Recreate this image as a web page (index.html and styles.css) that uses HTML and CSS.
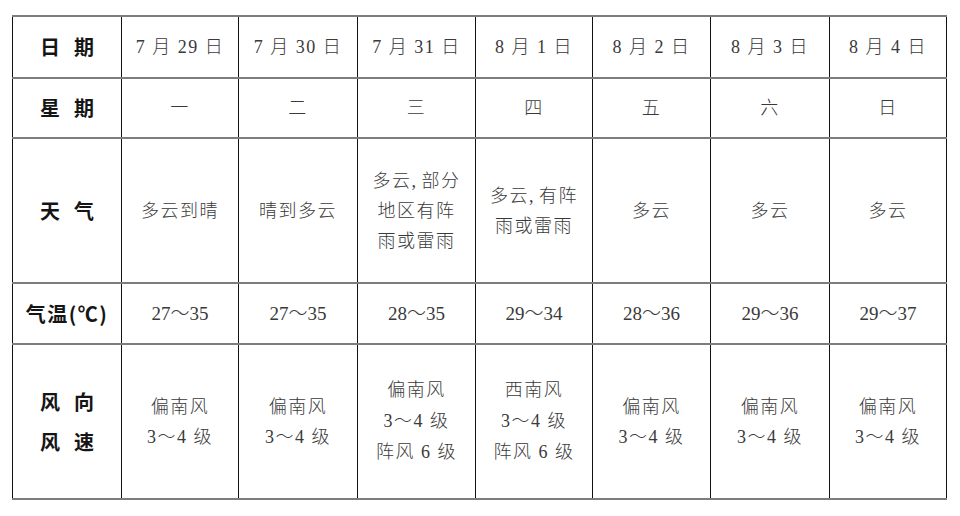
FILE: index.html
```html
<!DOCTYPE html>
<html lang="zh-CN">
<head>
<meta charset="utf-8">
<title>天气预报</title>
<link rel="stylesheet" href="styles.css">
</head>
<body>
<table class="forecast">
  <colgroup>
    <col class="c-label">
    <col class="c-117"><col class="c-119"><col class="c-118"><col class="c-117"><col class="c-118"><col class="c-119"><col class="c-117">
  </colgroup>
  <tr class="r-date">
    <th>日<span class="gap"></span>期</th>
    <td>7&nbsp;月&nbsp;29&nbsp;日</td>
    <td>7&nbsp;月&nbsp;30&nbsp;日</td>
    <td>7&nbsp;月&nbsp;31&nbsp;日</td>
    <td>8&nbsp;月&nbsp;1&nbsp;日</td>
    <td>8&nbsp;月&nbsp;2&nbsp;日</td>
    <td>8&nbsp;月&nbsp;3&nbsp;日</td>
    <td>8&nbsp;月&nbsp;4&nbsp;日</td>
  </tr>
  <tr class="r-week">
    <th>星<span class="gap"></span>期</th>
    <td>一</td><td>二</td><td>三</td><td>四</td><td>五</td><td>六</td><td>日</td>
  </tr>
  <tr class="r-weather">
    <th>天<span class="gap"></span>气</th>
    <td>多云到晴</td>
    <td>晴到多云</td>
    <td>多云<span class="comma">,</span>部分<br>地区有阵<br>雨或雷雨</td>
    <td>多云<span class="comma">,</span>有阵<br>雨或雷雨</td>
    <td>多云</td>
    <td>多云</td>
    <td>多云</td>
  </tr>
  <tr class="r-temp">
    <th class="temp-label">气温(℃)</th>
    <td>27～35</td><td>27～35</td><td>28～35</td><td>29～34</td><td>28～36</td><td>29～36</td><td>29～37</td>
  </tr>
  <tr class="r-wind">
    <th>风<span class="gap"></span>向<br>风<span class="gap"></span>速</th>
    <td>偏南风<br>3～4&nbsp;级</td>
    <td>偏南风<br>3～4&nbsp;级</td>
    <td class="three">偏南风<br>3～4&nbsp;级<br>阵风&nbsp;6&nbsp;级</td>
    <td class="three">西南风<br>3～4&nbsp;级<br>阵风&nbsp;6&nbsp;级</td>
    <td>偏南风<br>3～4&nbsp;级</td>
    <td>偏南风<br>3～4&nbsp;级</td>
    <td>偏南风<br>3～4&nbsp;级</td>
  </tr>
</table>
</body>
</html>
```
FILE: styles.css
```css
html, body {
  margin: 0;
  padding: 0;
  background: #ffffff;
}
body {
  padding: 15px 0 0 12px;
}
.forecast {
  border-collapse: collapse;
  table-layout: fixed;
  width: 934px;
}
.c-label { width: 109px; }
.c-117 { width: 117px; }
.c-118 { width: 118px; }
.c-119 { width: 119px; }

.forecast th,
.forecast td {
  border-left: 1px solid #111111;
  border-right: 1px solid #111111;
  border-top: 2px solid #7d7d7d;
  border-bottom: 2px solid #7d7d7d;
  padding: 0;
  text-align: center;
  vertical-align: middle;
}
.forecast th {
  font-family: "Noto Sans CJK SC", sans-serif;
  font-weight: 700;
  font-size: 20px;
  color: #151515;
  line-height: 40px;
}
.gap {
  display: inline-block;
  width: 14px;
}
.temp-label {
  letter-spacing: 1.5px;
}
.forecast td {
  font-family: "Liberation Serif", "Noto Sans CJK SC", serif;
  font-weight: 300;
  font-size: 18px;
  letter-spacing: 1.5px;
  color: #3a3a3a;
  line-height: 30px;
}
.r-date { height: 62px; }
.r-week { height: 60px; }
.r-weather { height: 145px; }
.r-temp { height: 61px; }
.r-wind { height: 155px; }

.r-temp td {
  font-size: 19px;
  letter-spacing: 0;
}
.r-wind td.three {
  line-height: 31px;
}
.comma {
  font-family: "Liberation Serif", serif;
  margin-right: 4px;
}
```
